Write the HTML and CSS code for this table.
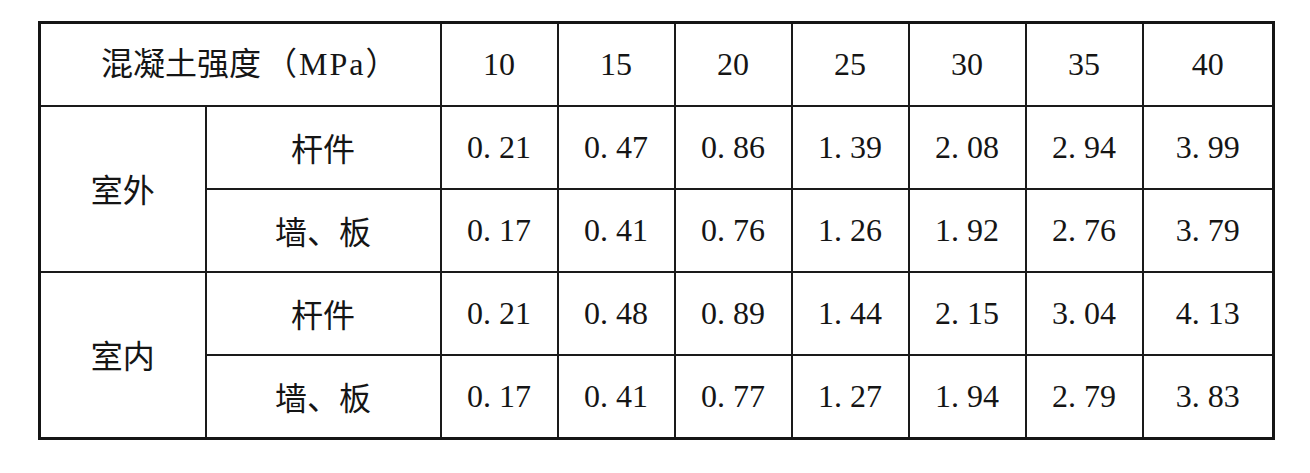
FILE: index.html
```html
<!DOCTYPE html>
<html lang="zh">
<head>
<meta charset="utf-8">
<title>混凝土强度</title>
<link rel="stylesheet" href="styles.css">
</head>
<body>
<table class="grid">
  <colgroup>
    <col class="c-env">
    <col class="c-kind">
    <col class="c-val"><col class="c-val"><col class="c-val"><col class="c-val"><col class="c-val"><col class="c-val">
    <col class="c-last">
  </colgroup>
  <tr>
    <th colspan="2" class="cn head">混凝土强度<span class="paren">（MPa）</span></th>
    <th>10</th><th>15</th><th>20</th><th>25</th><th>30</th><th>35</th><th>40</th>
  </tr>
  <tr>
    <td rowspan="2" class="cn">室外</td>
    <td class="cn">杆件</td>
    <td>0. 21</td><td>0. 47</td><td>0. 86</td><td>1. 39</td><td>2. 08</td><td>2. 94</td><td>3. 99</td>
  </tr>
  <tr>
    <td class="cn">墙、板</td>
    <td>0. 17</td><td>0. 41</td><td>0. 76</td><td>1. 26</td><td>1. 92</td><td>2. 76</td><td>3. 79</td>
  </tr>
  <tr>
    <td rowspan="2" class="cn">室内</td>
    <td class="cn">杆件</td>
    <td>0. 21</td><td>0. 48</td><td>0. 89</td><td>1. 44</td><td>2. 15</td><td>3. 04</td><td>4. 13</td>
  </tr>
  <tr>
    <td class="cn">墙、板</td>
    <td>0. 17</td><td>0. 41</td><td>0. 77</td><td>1. 27</td><td>1. 94</td><td>2. 79</td><td>3. 83</td>
  </tr>
</table>
</body>
</html>
```
FILE: styles.css
```css
html, body {
  margin: 0;
  background: #ffffff;
}
body {
  padding: 21px 0 0 38px;
  color: #151515;
  font-family: "Liberation Serif", "Noto Sans CJK SC", serif;
  font-size: 32px;
}
.grid {
  border-collapse: collapse;
  table-layout: fixed;
  width: 1234px;
  border: 3px solid #151515;
}
.c-env { width: 166px; }
.c-kind { width: 235px; }
.c-val { width: 117px; }
.c-last { width: 131px; }
.grid th,
.grid td {
  border: 2px solid #1a1a1a;
  height: 79px;
  padding: 0 0 2px 0;
  text-align: center;
  vertical-align: middle;
  font-weight: normal;
  line-height: 1;
}
.grid .cn {
  font-family: "Noto Sans CJK SC", sans-serif;
  font-size: 32px;
}
.grid th.cn {
  font-family: "Liberation Serif", "Noto Sans CJK SC", serif;
}
.grid th.head {
  padding-left: 20px;
}
.paren {
  letter-spacing: 2px;
  padding-left: 4px;
}
```
